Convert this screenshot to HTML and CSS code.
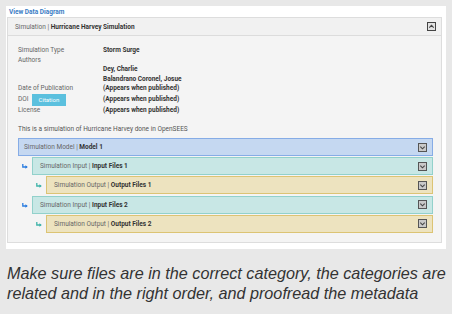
FILE: index.html
```html
<!DOCTYPE html>
<html>
<head>
<meta charset="utf-8">
<link rel="stylesheet" href="styles.css">
</head>
<body>
<div class="card">
  <a class="diagram-link">View Data Diagram</a>
  <div class="panel">
    <div class="panel-head">
      <span><span class="light">Simulation | </span><b>Hurricane Harvey Simulation</b></span>
      <svg class="toggle" viewBox="0 0 9 9" width="9" height="9"><rect x="0.5" y="0.5" width="8" height="8" fill="#e2e2e2" stroke="#444"/><path d="M2.3 5.6 L4.5 3.4 L6.7 5.6" fill="none" stroke="#444" stroke-width="1.1"/></svg>
    </div>
    <div class="panel-body">
      <div class="meta">
        <div class="lbl">Simulation Type</div><div class="val">Storm Surge</div>
        <div class="lbl">Authors</div><div class="val"></div>
        <div class="lbl"></div><div class="val">Dey, Charlie</div>
        <div class="lbl"></div><div class="val">Balandrano Coronel, Josue</div>
        <div class="lbl">Date of Publication</div><div class="val">(Appears when published)</div>
        <div class="lbl doi">DOI <span class="btn">Citation</span></div><div class="val doi">(Appears when published)</div>
        <div class="lbl">License</div><div class="val">(Appears when published)</div>
      </div>
      <p class="desc">This is a simulation of Hurricane Harvey done in OpenSEES</p>
      <div class="tree">
        <div class="row lvl0 model"><span><span class="light">Simulation Model | </span><b>Model 1</b></span>
          <svg class="icon" viewBox="0 0 9 9" width="9" height="9"><rect x="0.5" y="0.5" width="8" height="8" fill="#c9c9c9" stroke="#555"/><path d="M2.3 3.6 L4.5 5.8 L6.7 3.6" fill="none" stroke="#444" stroke-width="1.1"/></svg></div>
        <div class="row lvl1 input"><svg class="arrow" viewBox="0 0 6 5" width="6" height="5"><path d="M0.8 0 V3 H5" fill="none" stroke="#2b7de0" stroke-width="1.3"/><path d="M3.4 1.2 L5.8 3 L3.4 4.8 Z" fill="#2b7de0"/></svg><span><span class="light">Simulation Input | </span><b>Input Files 1</b></span>
          <svg class="icon" viewBox="0 0 9 9" width="9" height="9"><rect x="0.5" y="0.5" width="8" height="8" fill="#c9c9c9" stroke="#555"/><path d="M2.3 3.6 L4.5 5.8 L6.7 3.6" fill="none" stroke="#444" stroke-width="1.1"/></svg></div>
        <div class="row lvl2 output"><svg class="arrow" viewBox="0 0 6 5" width="6" height="5"><path d="M0.8 0 V3 H5" fill="none" stroke="#3fb3a9" stroke-width="1.3"/><path d="M3.4 1.2 L5.8 3 L3.4 4.8 Z" fill="#3fb3a9"/></svg><span><span class="light">Simulation Output | </span><b>Output Files 1</b></span>
          <svg class="icon" viewBox="0 0 9 9" width="9" height="9"><rect x="0.5" y="0.5" width="8" height="8" fill="#c9c9c9" stroke="#555"/><path d="M2.3 3.6 L4.5 5.8 L6.7 3.6" fill="none" stroke="#444" stroke-width="1.1"/></svg></div>
        <div class="row lvl1 input"><svg class="arrow" viewBox="0 0 6 5" width="6" height="5"><path d="M0.8 0 V3 H5" fill="none" stroke="#2b7de0" stroke-width="1.3"/><path d="M3.4 1.2 L5.8 3 L3.4 4.8 Z" fill="#2b7de0"/></svg><span><span class="light">Simulation Input | </span><b>Input Files 2</b></span>
          <svg class="icon" viewBox="0 0 9 9" width="9" height="9"><rect x="0.5" y="0.5" width="8" height="8" fill="#c9c9c9" stroke="#555"/><path d="M2.3 3.6 L4.5 5.8 L6.7 3.6" fill="none" stroke="#444" stroke-width="1.1"/></svg></div>
        <div class="row lvl2 output"><svg class="arrow" viewBox="0 0 6 5" width="6" height="5"><path d="M0.8 0 V3 H5" fill="none" stroke="#3fb3a9" stroke-width="1.3"/><path d="M3.4 1.2 L5.8 3 L3.4 4.8 Z" fill="#3fb3a9"/></svg><span><span class="light">Simulation Output | </span><b>Output Files 2</b></span>
          <svg class="icon" viewBox="0 0 9 9" width="9" height="9"><rect x="0.5" y="0.5" width="8" height="8" fill="#c9c9c9" stroke="#555"/><path d="M2.3 3.6 L4.5 5.8 L6.7 3.6" fill="none" stroke="#444" stroke-width="1.1"/></svg></div>
      </div>
    </div>
  </div>
</div>
<p class="caption">Make sure files are in the correct category, the categories are related and in the right order, and proofread the metadata</p>
</body>
</html>
```

FILE: styles.css
```css
html, body {
  margin: 0;
  padding: 0;
}
body {
  background: #e8e8e8;
  padding: 6px 6px 0 6px;
  font-family: Roboto, "Liberation Sans", sans-serif;
  font-size: 6.5px;
  color: #333;
}
.card {
  background: #fff;
  padding: 2px 4px 6px 1px;
}
.diagram-link {
  display: block;
  margin-left: 2px;
  color: #3a7cc4;
  font-weight: bold;
  line-height: 9px;
  height: 9px;
}
.panel {
  border: 1px solid #dddddd;
  background: #f4f4f4;
}
.panel-head {
  height: 17px;
  background: #f1f1f1;
  border-bottom: 1px solid #dcdcdc;
  display: flex;
  align-items: center;
  padding: 0 5px 0 7px;
  color: #333;
}
.light {
  color: #666;
  font-weight: normal;
}
.panel-head b, .row b, .val {
  font-weight: bold;
  color: #333;
}
.toggle {
  margin-left: auto;
}
.panel-body {
  padding: 10px 8px 9px 10px;
}
.meta {
  display: grid;
  grid-template-columns: 85px 1fr;
  grid-template-rows: 9.5px 9.5px 9.5px 9.5px 9.5px 12px 9.5px;
  line-height: 9.5px;
}
.lbl {
  color: #666;
}
.lbl.doi, .val.doi {
  height: 12px;
  display: flex;
  align-items: center;
}
.btn {
  display: inline-block;
  background: #5bc0de;
  color: #fff;
  margin-left: 3px;
  padding: 0 7px;
  line-height: 12px;
  height: 12px;
  font-size: 6px;
}
.desc {
  margin: 10px 0 4px 0;
  line-height: 9px;
  color: #555;
}
.tree {
  display: flex;
  flex-direction: column;
  gap: 1.2px;
}
.row {
  height: 18px;
  box-sizing: border-box;
  display: flex;
  align-items: center;
  padding: 0 5px 0 5px;
  position: relative;
}
.row .icon {
  margin-left: auto;
}
.lvl1 { margin-left: 14px; padding-left: 7px; }
.lvl2 { margin-left: 28px; padding-left: 7px; }
.arrow {
  position: absolute;
  left: -11px;
  top: 6px;
}
.model {
  background: #c5d8f1;
  border: 1px solid #86ace6;
}
.input {
  background: #c8e7e5;
  border: 1px solid #92d1cb;
}
.output {
  background: #ede3bf;
  border: 1px solid #dcc474;
}
.caption {
  margin: 14px -6px 0 1px;
  font-family: "Liberation Sans", Arial, sans-serif;
  font-style: italic;
  font-size: 16.2px;
  line-height: 20px;
  color: #333;
}
```
